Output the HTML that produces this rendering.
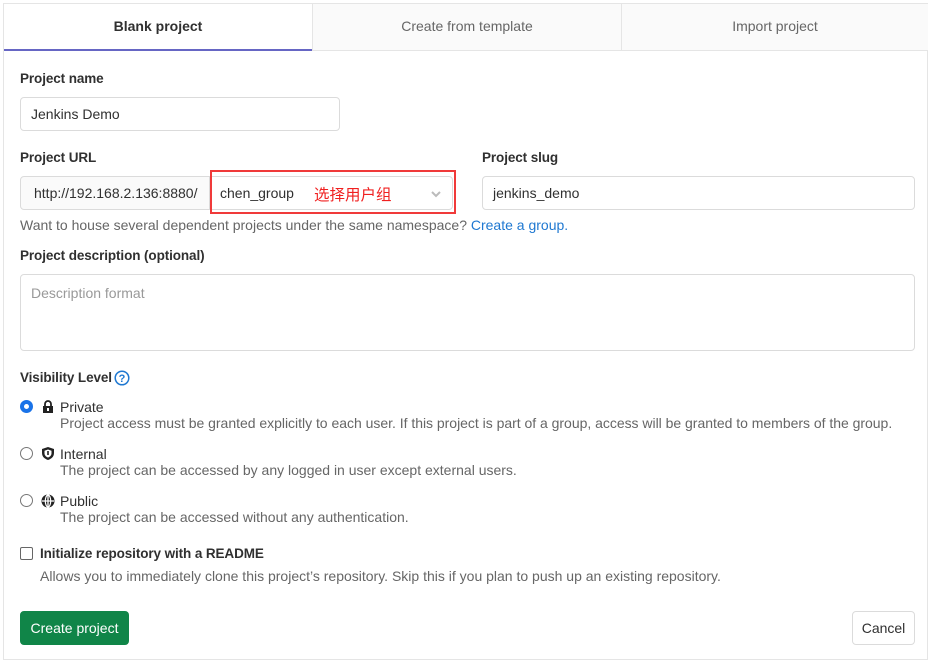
<!DOCTYPE html>
<html><head><style>
body{margin:0;width:930px;height:663px;background:#fff;font-family:"Liberation Sans","Noto Sans CJK SC",sans-serif;font-size:14px;color:#303030;position:relative;overflow:hidden}
.a{position:absolute}
.frame{left:3px;top:3px;width:925px;height:657px;border:1px solid #e5e5e5;box-sizing:border-box}
.tab{top:4px;height:47px;line-height:45px;text-align:center;color:#666;background:#fafafa;border-bottom:1px solid #e5e5e5;box-sizing:border-box}
.lbl{font-weight:bold;color:#303030;font-size:13.5px;letter-spacing:-0.1px}
.inp{border:1px solid #dbdbdb;border-radius:4px;box-sizing:border-box;padding-left:10px;line-height:32px;color:#303030}
.help{color:#666}
.radio{width:13px;height:13px;border:1px solid #777;border-radius:50%;box-sizing:border-box}
</style></head><body>
<div class="a frame"></div>
<div class="a tab" style="left:4px;width:308px;background:#fff;color:#303030;font-weight:bold;border-bottom:2px solid #6666c4">Blank project</div>
<div class="a tab" style="left:312px;width:309px;border-left:1px solid #e5e5e5">Create from template</div>
<div class="a tab" style="left:621px;width:307px;border-left:1px solid #e5e5e5">Import project</div>

<div class="a lbl" style="left:20px;top:71px">Project name</div>
<div class="a inp" style="left:20px;top:97px;width:320px;height:34px">Jenkins Demo</div>

<div class="a lbl" style="left:20px;top:150px">Project URL</div>
<div class="a inp" style="left:20px;top:176px;width:190px;height:34px;background:#fafafa;border-radius:4px 0 0 4px;padding-left:13px">http://192.168.2.136:8880/</div>
<div class="a inp" style="left:209px;top:176px;width:244px;height:34px;border-radius:0 4px 4px 0">chen_group</div>
<div class="a" style="left:314px;top:183px;color:#f02020;font-size:15.5px">选择用户组</div>
<svg class="a" style="left:430px;top:189px" width="12" height="10"><path d="M2 3l4 4 4-4" stroke="#bbb" stroke-width="2" fill="none"/></svg>
<div class="a" style="left:210px;top:170px;width:246px;height:44px;border:2px solid #f03a3a;box-sizing:border-box"></div>
<div class="a lbl" style="left:482px;top:150px">Project slug</div>
<div class="a inp" style="left:482px;top:176px;width:433px;height:34px">jenkins_demo</div>
<div class="a help" style="left:20px;top:217px">Want to house several dependent projects under the same namespace? <span style="color:#1f78d1">Create a group.</span></div>

<div class="a lbl" style="left:20px;top:248px">Project description (optional)</div>
<div class="a inp" style="left:20px;top:274px;width:895px;height:77px;line-height:36px;color:#999">Description format</div>

<div class="a lbl" style="left:20px;top:370px">Visibility Level</div>
<svg class="a" style="left:114px;top:370px" width="16" height="16"><circle cx="8" cy="8" r="6.8" stroke="#1f78d1" stroke-width="1.5" fill="none"/><text x="8" y="12" font-size="11" font-weight="bold" fill="#1f78d1" text-anchor="middle" font-family="Liberation Sans">?</text></svg>

<div class="a radio" style="left:20px;top:400px;border:4px solid #1a73e8"></div>
<svg class="a" style="left:41px;top:399px" width="14" height="15"><path d="M4 7V5a3 3 0 0 1 6 0v2" stroke="#222" stroke-width="1.8" fill="none"/><rect x="2" y="7" width="10" height="7" fill="#222"/><rect x="6" y="9" width="2" height="3" fill="#fff"/></svg>
<div class="a" style="left:60px;top:399px">Private</div>
<div class="a help" style="left:60px;top:415px;letter-spacing:-0.02px">Project access must be granted explicitly to each user. If this project is part of a group, access will be granted to members of the group.</div>

<div class="a radio" style="left:20px;top:447px"></div>
<svg class="a" style="left:41px;top:446px" width="14" height="15"><path d="M7 1l6 2v4c0 4-3 6-6 7-3-1-6-3-6-7V3z" fill="#222"/><path d="M7 3.5l3.5 1.2v2.5c0 2.3-1.7 3.6-3.5 4.3-1.8-.7-3.5-2-3.5-4.3V4.7z" fill="#fff"/><path d="M7 5v4" stroke="#222" stroke-width="1.6"/></svg>
<div class="a" style="left:60px;top:446px">Internal</div>
<div class="a help" style="left:60px;top:462px">The project can be accessed by any logged in user except external users.</div>

<div class="a radio" style="left:20px;top:494px"></div>
<svg class="a" style="left:41px;top:494px" width="14" height="14"><circle cx="7" cy="7" r="6.5" fill="#222"/><path d="M1 7h12M7 1v12" stroke="#fff" stroke-width="1.3"/><ellipse cx="7" cy="7" rx="2.7" ry="6" stroke="#fff" stroke-width="1.2" fill="none"/></svg>
<div class="a" style="left:60px;top:493px">Public</div>
<div class="a help" style="left:60px;top:509px">The project can be accessed without any authentication.</div>

<div class="a" style="left:20px;top:547px;width:13px;height:13px;border:1px solid #666;border-radius:2px;box-sizing:border-box"></div>
<div class="a lbl" style="left:40px;top:546px">Initialize repository with a README</div>
<div class="a help" style="left:40px;top:568px">Allows you to immediately clone this project’s repository. Skip this if you plan to push up an existing repository.</div>

<div class="a" style="left:20px;top:611px;width:109px;height:34px;background:#108548;border-radius:4px;color:#fff;line-height:34px;text-align:center">Create project</div>
<div class="a" style="left:852px;top:611px;width:63px;height:34px;border:1px solid #dbdbdb;border-radius:4px;box-sizing:border-box;line-height:32px;text-align:center">Cancel</div>
</body></html>
